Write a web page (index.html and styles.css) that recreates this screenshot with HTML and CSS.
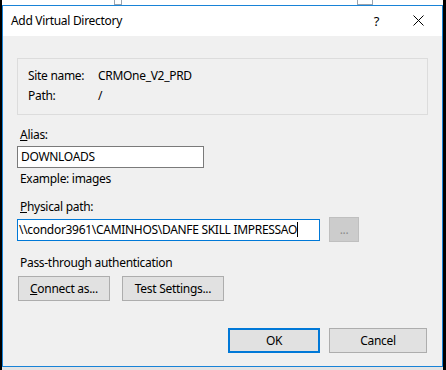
FILE: index.html
```html
<!DOCTYPE html>
<html lang="en">
<head>
  <meta charset="UTF-8">
  <meta name="viewport" content="width=device-width, initial-scale=1.0">
  <title>Add Virtual Directory</title>
  <link rel="stylesheet" href="styles.css">
</head>
<body>
  <div class="screen">
    <div class="edge-left"></div>
    <div class="middle">
      <div class="backdrop-top">
        <span class="bg-mark bg-mark-a"></span>
        <span class="bg-mark bg-mark-b"></span>
      </div>

      <div class="dialog">
        <div class="titlebar">
          <span class="title">Add Virtual Directory</span>
          <span class="help">?</span>
          <span class="close">
            <svg width="11" height="11" viewBox="0 0 11 11">
              <path d="M0.5 0.5 L10.5 10.5 M10.5 0.5 L0.5 10.5" stroke="#000" stroke-width="1" fill="none"/>
            </svg>
          </span>
        </div>

        <div class="content">
          <div class="groupbox">
            <div class="info-row"><span class="info-label">Site name:</span><span>CRMOne_V2_PRD</span></div>
            <div class="info-row"><span class="info-label">Path:</span><span>/</span></div>
          </div>

          <div class="label alias-label"><u>A</u>lias:</div>
          <div class="textbox alias-box">DOWNLOADS</div>
          <div class="label hint">Example: images</div>

          <div class="label path-label"><u>P</u>hysical path:</div>
          <div class="path-row">
            <div class="textbox path-box focused">\\condor3961\CAMINHOS\DANFE SKILL IMPRESSAO<span class="caret"></span></div>
            <div class="browse-btn">...</div>
          </div>

          <div class="label auth-label">Pass-through authentication</div>
          <div class="auth-row">
            <div class="btn connect-btn"><u>C</u>onnect as...</div>
            <div class="btn test-btn">Test Settin<u>g</u>s...</div>
          </div>

          <div class="footer-row">
            <div class="btn ok-btn">OK</div>
            <div class="btn cancel-btn">Cancel</div>
          </div>
        </div>
      </div>

      <div class="backdrop-bottom"></div>
    </div>
    <div class="edge-right"></div>
  </div>
</body>
</html>
```

FILE: styles.css
```css
body {
  margin: 0;
  background: #000;
  font-family: 'Noto Sans', 'Segoe UI', sans-serif;
  font-size: 12px;
  letter-spacing: -0.3px;
  color: #000;
}
.screen {
  display: flex;
  width: 446px;
  height: 370px;
  overflow: hidden;
}
.edge-left {
  width: 2px;
  background: #000;
}
.edge-right {
  width: 3px;
  background: #000;
}
.middle {
  width: 441px;
  display: flex;
  flex-direction: column;
}
.backdrop-top {
  height: 5px;
  background: #fff;
  display: flex;
  gap: 40px;
  padding-left: 112px;
}
.bg-mark {
  display: block;
  width: 6px;
  height: 4px;
  border: 1px solid #9aa3ad;
  border-top: none;
}
.bg-mark-b {
  margin-left: 195px;
  width: 14px;
}
.backdrop-bottom {
  height: 3px;
  background: #e4e4e4;
}
.dialog {
  height: 362px;
  box-sizing: border-box;
  border: 1px solid #1883d7;
  background: #f0f0f0;
  display: flex;
  flex-direction: column;
}
.titlebar {
  height: 30px;
  background: #fff;
  display: flex;
  align-items: center;
  padding-left: 8px;
}
.title {
  flex: 1;
  padding-bottom: 1px;
}
.help {
  font-size: 13px;
  margin-right: 34px;
  padding-bottom: 1px;
}
.close {
  display: flex;
  margin-right: 18px;
  padding-bottom: 1px;
}
.content {
  padding: 22px 14px 0 14px;
  display: flex;
  flex-direction: column;
  align-items: flex-start;
}
.groupbox {
  align-self: stretch;
  border: 1px solid #dcdcdc;
  padding: 7px 10px 8px 10px;
}
.info-row {
  display: flex;
  line-height: 20px;
}
.info-label {
  width: 70px;
}
.label {
  line-height: 20px;
  padding-left: 3px;
}
.alias-label {
  margin-top: 10px;
  margin-bottom: 1px;
}
.textbox {
  box-sizing: border-box;
  height: 22px;
  line-height: 20px;
  border: 1px solid #7a7a7a;
  background: #fff;
  padding-left: 3px;
  white-space: nowrap;
}
.alias-box {
  width: 187px;
}
.hint {
  margin-top: 1px;
}
.path-label {
  margin-top: 8px;
}
.path-row {
  display: flex;
  align-items: center;
  gap: 9px;
}
.path-box {
  width: 303px;
  padding-left: 1px;
}
.focused {
  border-color: #0078d7;
}
.caret {
  display: inline-block;
  width: 1px;
  height: 15px;
  background: #000;
  vertical-align: -3px;
}
.browse-btn {
  box-sizing: border-box;
  width: 30px;
  height: 25px;
  border: 1px solid #bfbfbf;
  background: #cccccc;
  color: #8c8c8c;
  text-align: center;
  line-height: 23px;
}
.auth-label {
  margin-top: 11px;
}
.auth-row {
  display: flex;
  gap: 12px;
  margin-top: 3px;
  padding-left: 1px;
}
.btn {
  box-sizing: border-box;
  height: 25px;
  border: 1px solid #adadad;
  background: #e1e1e1;
  text-align: center;
  line-height: 23px;
}
.connect-btn {
  width: 92px;
}
.test-btn {
  width: 102px;
}
.footer-row {
  align-self: stretch;
  display: flex;
  justify-content: flex-end;
  gap: 9px;
  margin-top: 27px;
  padding-right: 1px;
}
.ok-btn {
  width: 92px;
  border: 2px solid #0078d7;
  line-height: 21px;
}
.cancel-btn {
  width: 98px;
}
```
